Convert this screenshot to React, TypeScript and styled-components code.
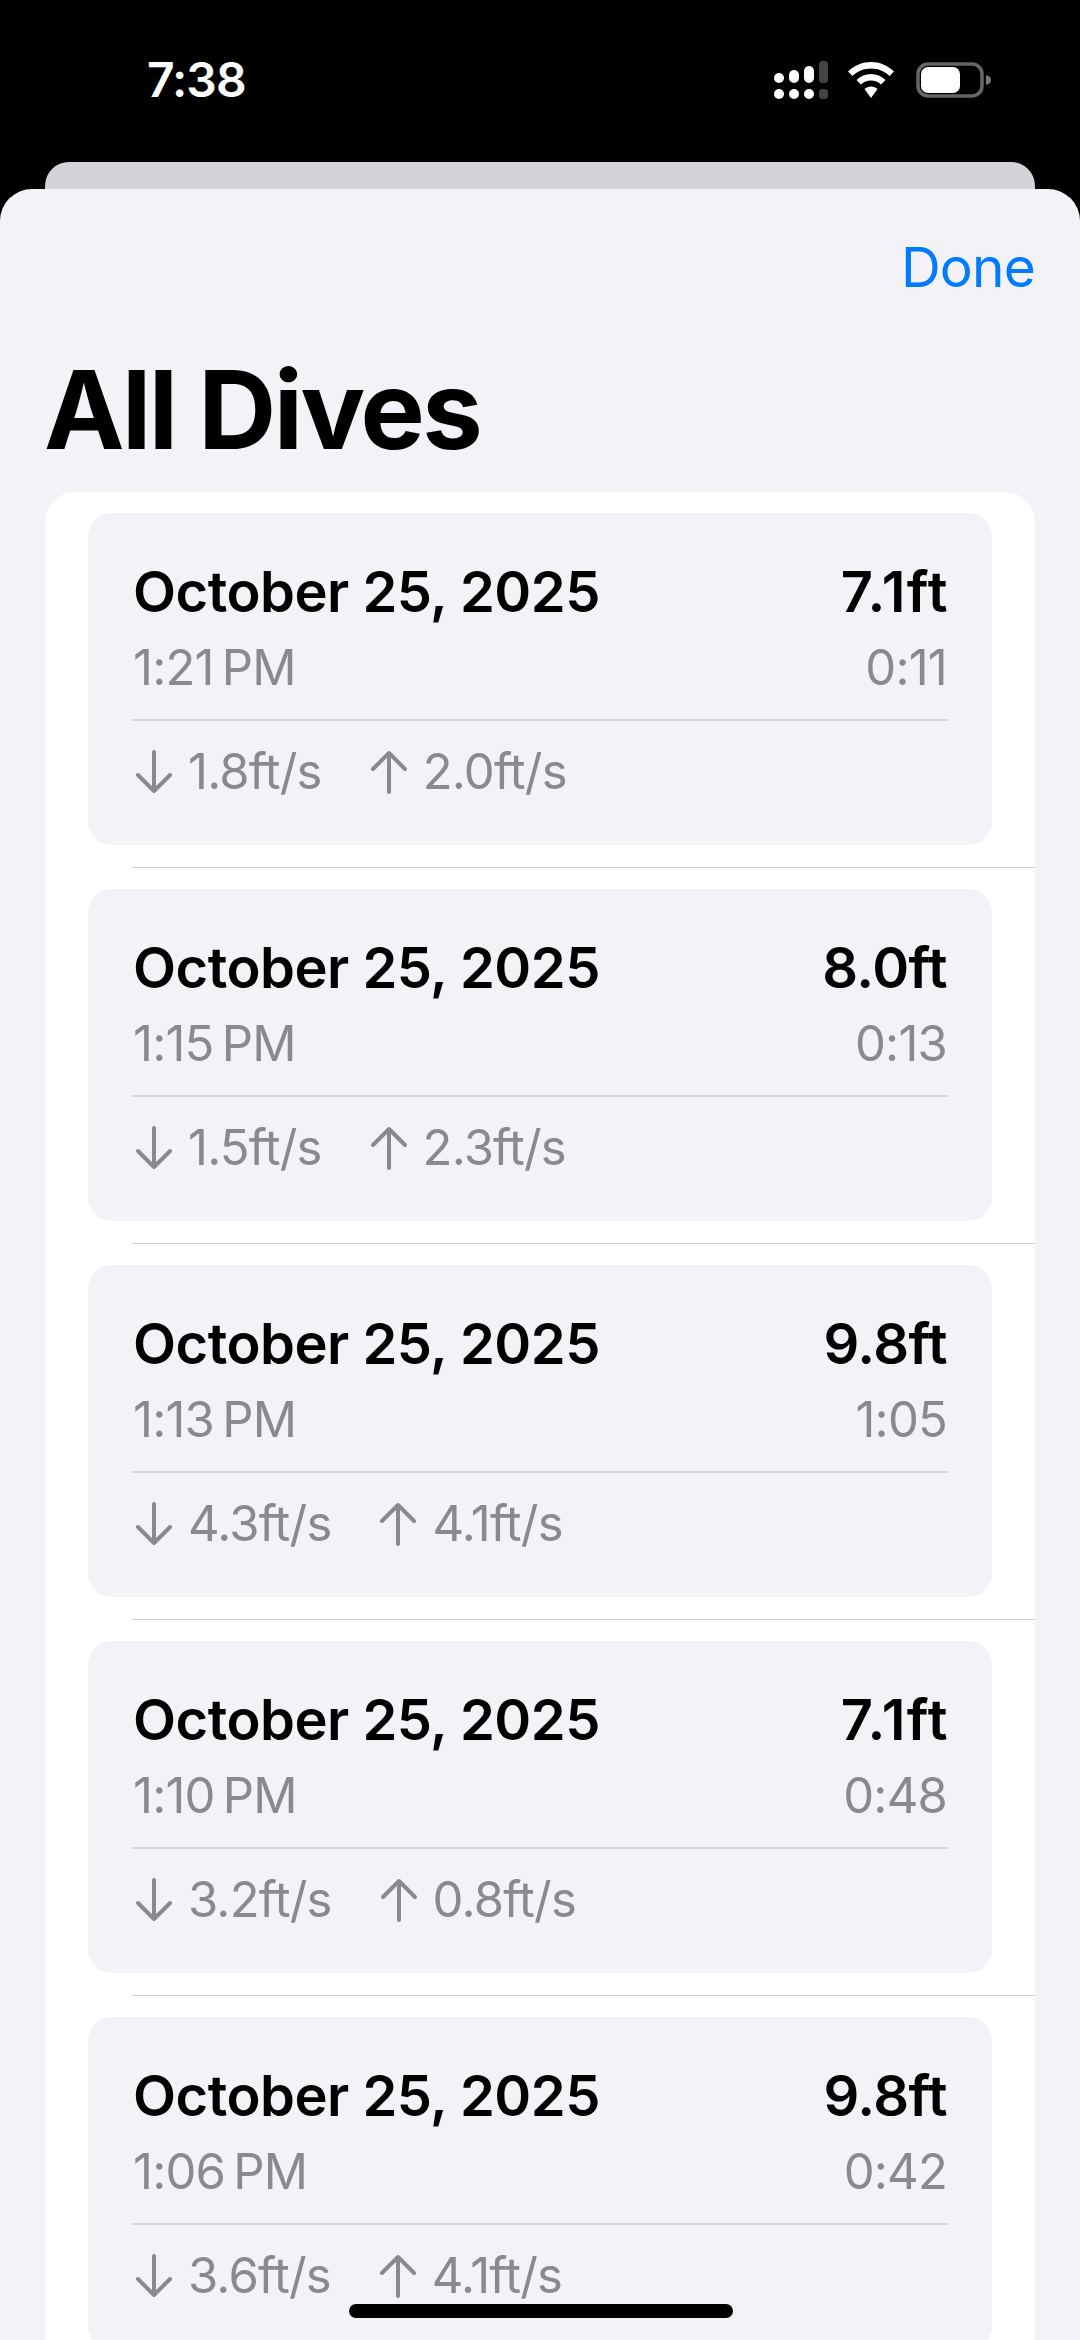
import styled, { createGlobalStyle } from "styled-components";

const GlobalStyle = createGlobalStyle`
  html, body {
    margin: 0;
    padding: 0;
    background: #000;
  }
  * {
    box-sizing: border-box;
  }
`;

const Phone = styled.div`
  width: 1080px;
  height: 2340px;
  background: #000;
  display: flex;
  flex-direction: column;
  overflow: hidden;
  position: relative;
  font-family: Inter, "Liberation Sans", sans-serif;
`;

const StatusBar = styled.div`
  height: 162px;
  flex-shrink: 0;
  padding: 58px 88px 0 147px;
  display: flex;
  justify-content: space-between;
  align-items: flex-start;
`;

const Clock = styled.div`
  font-size: 48px;
  line-height: 44px;
  font-weight: 600;
  color: #fff;
  letter-spacing: -1px;
`;

const StatusIcons = styled.div`
  display: flex;
  align-items: center;
  gap: 20px;
  margin-top: 3px;
`;

const BackSheet = styled.div`
  height: 27px;
  flex-shrink: 0;
  margin: 0 45px;
  background: #d4d4d8;
  border-radius: 24px 24px 0 0;
`;

const Sheet = styled.div`
  flex: 1;
  min-height: 0;
  background: #f2f2f7;
  border-radius: 32px 32px 0 0;
  padding: 0 45px;
`;

const TopBar = styled.div`
  display: flex;
  justify-content: flex-end;
  padding-top: 47px;
  height: 120px;
`;

const DoneButton = styled.div`
  font-size: 55px;
  line-height: 62px;
  color: #007aff;
  letter-spacing: -0.8px;
`;

const PageTitle = styled.h1`
  margin: 0 0 0 -1px;
  font-size: 108px;
  line-height: 124px;
  font-weight: 700;
  color: #000;
  letter-spacing: -2.6px;
  height: 183px;
  padding-top: 39px;
`;

const ListPanel = styled.div`
  background: #fff;
  border-radius: 30px 30px 0 0;
`;

const Row = styled.div`
  padding: 21px 43px 22px;
`;

const Separator = styled.div`
  height: 1px;
  margin-left: 87px;
  background: #d1d1d6;
`;

const Card = styled.div`
  height: 332px;
  background: #f2f2f7;
  border-radius: 24px;
  padding: 48px 45px 0;
  display: flex;
  flex-direction: column;
`;

const HeadLine = styled.div`
  display: flex;
  justify-content: space-between;
  align-items: baseline;
  height: 62px;
`;

const DateText = styled.div`
  font-size: 56px;
  line-height: 62px;
  font-weight: 600;
  color: #000;
  letter-spacing: -0.5px;
`;

const Depth = styled(DateText)<{ $spread: boolean }>`
  letter-spacing: ${(p) => (p.$spread ? "1.4px" : "-0.5px")};
  margin-right: ${(p) => (p.$spread ? "-2px" : "0")};
`;

const SubLine = styled.div`
  display: flex;
  justify-content: space-between;
  height: 78px;
  margin-top: 18px;
  font-size: 49px;
  line-height: 54px;
  color: #8a8a8e;
  letter-spacing: -0.8px;
`;

const Divider = styled.div`
  height: 2px;
  background: #d1d1d6;
  flex-shrink: 0;
`;

const Speeds = styled.div`
  display: flex;
  align-items: center;
  gap: 48px;
  margin-top: 24px;
  padding-left: 2px;
  font-size: 49px;
  line-height: 54px;
  color: #8a8a8e;
  letter-spacing: -0.8px;
`;

const Speed = styled.div`
  display: flex;
  align-items: center;
  gap: 15px;
`;

const HomeIndicator = styled.div`
  position: absolute;
  left: 349px;
  top: 2304px;
  width: 384px;
  height: 14px;
  border-radius: 7px;
  background: #000;
`;

const ArrowDown = () => (
  <svg width="38" height="44" viewBox="0 0 38 44" fill="none" stroke="#8a8a8e" strokeWidth="4" strokeLinecap="round" strokeLinejoin="round">
    <path d="M19 2V41M3 25L19 41L35 25" />
  </svg>
);

const ArrowUp = () => (
  <svg width="38" height="44" viewBox="0 0 38 44" fill="none" stroke="#8a8a8e" strokeWidth="4" strokeLinecap="round" strokeLinejoin="round">
    <path d="M19 42V3M3 19L19 3L35 19" />
  </svg>
);

const SignalIcon = () => (
  <svg width="54" height="38" viewBox="0 0 54 38">
    <g fill="#fff">
      <rect x="0" y="12" width="10" height="10" rx="5" />
      <rect x="15" y="9" width="10" height="13" rx="5" />
      <rect x="30" y="5" width="10" height="17" rx="5" />
      <circle cx="5" cy="33" r="5" />
      <circle cx="20" cy="33" r="5" />
      <circle cx="35" cy="33" r="5" />
    </g>
    <g fill="#444">
      <rect x="45" y="0" width="9" height="22" rx="3.5" />
      <rect x="45" y="28" width="9" height="10" rx="3.5" />
    </g>
  </svg>
);

const WifiIcon = () => (
  <svg width="48" height="36" viewBox="0 0 48 36">
    <path fill="#fff" d="M23 0C31.500 0 39.500 3.300 46 9.500L41.500 14C36.500 9.200 30 6.500 23 6.500C16 6.500 9.500 9.200 4.500 14L0 9.500C6.500 3.300 14.500 0 23 0Z" />
    <path fill="#fff" d="M23 12C28.500 12 33.500 14.100 37.500 18L33 22.500C30.300 19.900 26.800 18.400 23 18.400C19.200 18.400 15.700 19.900 13 22.500L8.500 18C12.500 14.100 17.500 12 23 12Z" />
    <path fill="#fff" d="M23 24.500C25.500 24.500 27.800 25.400 29.500 27L23 36L16.500 27C18.200 25.400 20.500 24.500 23 24.500Z" />
  </svg>
);

const BatteryIcon = () => (
  <svg width="76" height="36" viewBox="0 0 76 36">
    <rect x="2" y="2" width="64" height="32" rx="10" fill="none" stroke="#666" strokeWidth="3.500" />
    <rect x="5" y="5" width="39" height="26" rx="7" fill="#fff" />
    <path fill="#777" d="M70 13C73 13.500 75 15.500 75 18C75 20.500 73 22.500 70 23Z" />
  </svg>
);

const dives = [
  { time: "1:21\u202fPM", depth: "7.1ft", length: "0:11", down: "1.8ft/s", up: "2.0ft/s" },
  { time: "1:15\u202fPM", depth: "8.0ft", length: "0:13", down: "1.5ft/s", up: "2.3ft/s" },
  { time: "1:13\u202fPM", depth: "9.8ft", length: "1:05", down: "4.3ft/s", up: "4.1ft/s" },
  { time: "1:10\u202fPM", depth: "7.1ft", length: "0:48", down: "3.2ft/s", up: "0.8ft/s" },
  { time: "1:06\u202fPM", depth: "9.8ft", length: "0:42", down: "3.6ft/s", up: "4.1ft/s" },
];

const App = () => {
  return (
    <Phone>
      <GlobalStyle />
      <StatusBar>
        <Clock>7:38</Clock>
        <StatusIcons>
          <SignalIcon />
          <WifiIcon />
          <BatteryIcon />
        </StatusIcons>
      </StatusBar>
      <BackSheet />
      <Sheet>
        <TopBar>
          <DoneButton>Done</DoneButton>
        </TopBar>
        <PageTitle>All Dives</PageTitle>
        <ListPanel>
          {dives.map((dive, i) => (
            <div key={i}>
              <Row>
                <Card>
                  <HeadLine>
                    <DateText>October 25, 2025</DateText>
                    <Depth $spread={dive.depth.includes("1")}>{dive.depth}</Depth>
                  </HeadLine>
                  <SubLine>
                    <span>{dive.time}</span>
                    <span>{dive.length}</span>
                  </SubLine>
                  <Divider />
                  <Speeds>
                    <Speed>
                      <ArrowDown />
                      {dive.down}
                    </Speed>
                    <Speed>
                      <ArrowUp />
                      {dive.up}
                    </Speed>
                  </Speeds>
                </Card>
              </Row>
              <Separator />
            </div>
          ))}
        </ListPanel>
      </Sheet>
      <HomeIndicator />
    </Phone>
  );
};

export default App;
